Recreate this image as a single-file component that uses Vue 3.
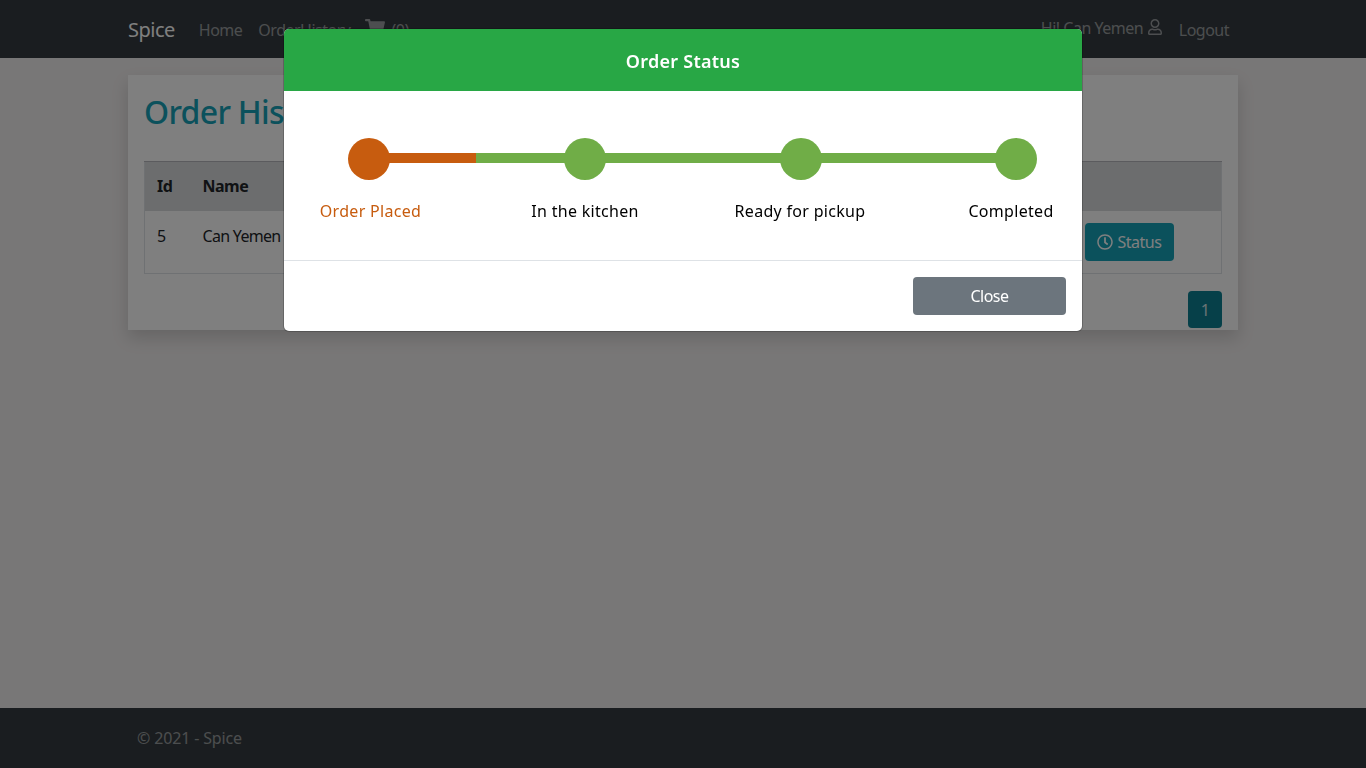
<template>
  <div class="page">
    <header class="navbar">
      <div class="wrap nav-inner">
        <a class="brand">Spice</a>
        <a class="nav-link">Home</a>
        <a class="nav-link">OrderHistory</a>
        <a class="nav-link cart">
          <svg class="cart-icon" viewBox="0 0 576 512"><path d="M528 301.3l47.3-208C578.7 78.300 567.300 64 552 64H159.200l-9.200-44.800C147.800 8 137.900 0 126.500 0H24C10.700 0 0 10.700 0 24v16c0 13.300 10.700 24 24 24h69.900l70.200 343.400C147.300 417.100 136 435.200 136 456c0 30.900 25.100 56 56 56s56-25.100 56-56c0-15.700-6.400-29.800-16.800-40h209.600C430.400 426.200 424 440.300 424 456c0 30.900 25.100 56 56 56s56-25.100 56-56c0-22.200-12.900-41.300-31.600-50.400l5.500-24.300c3.400-15-8-29.300-23.400-29.300H218.100l-6.500-32h293c11.200 0 20.900-7.800 23.400-18.700z"/></svg>
          <span>(0)</span>
        </a>
        <div class="nav-right">
          <span class="hello">Hi! Can Yemen
            <svg class="user-icon" viewBox="0 0 448 512"><path d="M313.600 304c-28.700 0-42.500 16-89.600 16-47.100 0-60.800-16-89.600-16C60.200 304 0 364.200 0 438.400V464c0 26.500 21.500 48 48 48h352c26.500 0 48-21.500 48-48v-25.600c0-74.200-60.200-134.400-134.400-134.400zM400 464H48v-25.600c0-47.600 38.800-86.400 86.400-86.400 14.600 0 38.300 16 89.600 16 51.700 0 74.900-16 89.600-16 47.600 0 86.400 38.800 86.400 86.400V464zM224 288c79.500 0 144-64.500 144-144S303.500 0 224 0 80 64.500 80 144s64.500 144 144 144zm0-240c52.900 0 96 43.100 96 96s-43.100 96-96 96-96-43.100-96-96 43.100-96 96-96z"/></svg>
          </span>
          <a class="nav-link">Logout</a>
        </div>
      </div>
    </header>

    <main class="wrap content">
      <section class="card">
        <h1>Order History</h1>
        <table>
          <thead>
            <tr>
              <th class="col-id">Id</th>
              <th class="col-name">Name</th>
              <th></th>
              <th class="col-action"></th>
            </tr>
          </thead>
          <tbody>
            <tr>
              <td>5</td>
              <td>Can Yemen</td>
              <td></td>
              <td>
                <button class="status-btn">
                  <svg class="clock-icon" viewBox="0 0 512 512"><path d="M256 8C119 8 8 119 8 256s111 248 248 248 248-111 248-248S393 8 256 8zm0 448c-110.500 0-200-89.500-200-200S145.500 56 256 56s200 89.500 200 200-89.500 200-200 200zm61.800-104.400l-84.900-61.700c-3.100-2.300-4.900-5.900-4.900-9.700V116c0-6.600 5.400-12 12-12h32c6.600 0 12 5.400 12 12v141.700l66.800 48.600c5.400 3.900 6.500 11.400 2.600 16.800L334.600 349c-3.900 5.300-11.400 6.500-16.800 2.600z"/></svg>
                  Status
                </button>
              </td>
            </tr>
          </tbody>
        </table>
        <div class="pager"><span class="page-num">1</span></div>
      </section>
    </main>

    <footer class="footer">
      <div class="wrap footer-inner">© 2021 - Spice</div>
    </footer>

    <div class="backdrop"></div>

    <div class="modal" role="dialog">
      <div class="modal-head">Order Status</div>
      <div class="modal-body">
        <div class="track">
          <div class="line"><div class="line-done"></div></div>
          <span v-for="(s, i) in steps" :key="s" class="dot" :class="{ active: i === current }"></span>
        </div>
        <div class="labels">
          <span v-for="(s, i) in steps" :key="s" class="label" :class="{ active: i === current }">{{ s }}</span>
        </div>
      </div>
      <div class="modal-foot">
        <button class="close-btn">Close</button>
      </div>
    </div>
  </div>
</template>

<script setup>
const steps = ['Order Placed', 'In the kitchen', 'Ready for pickup', 'Completed']
const current = 0
</script>

<style>
html, body { margin: 0; height: 100%; }
</style>

<style scoped>
.page {
  min-height: 768px;
  display: flex;
  flex-direction: column;
  background: #f1eeee;
  font-family: "Noto Sans", "Open Sans", sans-serif;
  font-size: 16px;
  letter-spacing: -.5px;
  color: #212529;
  overflow: hidden;
}
.wrap { width: 1110px; margin: 0 auto; }

.navbar { height: 58px; background: #343a40; flex: none; }
.nav-inner { display: flex; align-items: center; height: 58px; color: rgba(255,255,255,.5); }
.brand { color: #fff; font-size: 20px; margin-right: 24px; }
.nav-link { margin-right: 14px; margin-top: 1px; }
.nav-link:nth-of-type(2) { margin-right: 16px; }
.cart { display: flex; align-items: center; gap: 7px; margin-right: 0; }
.cart-icon { width: 20px; height: 18px; fill: rgba(255,255,255,.5); margin-top: -4px; }
.nav-right { margin-left: auto; display: flex; align-items: center; }
.hello { margin-right: 9px; margin-top: -2px; }
.user-icon { width: 14px; height: 16px; fill: rgba(255,255,255,.5); vertical-align: -1px; margin-left: 1px; }
.nav-right .nav-link { margin-left: 8px; margin-right: 9px; }

.content { flex: 1; padding-top: 17px; }
.card {
  height: 255px;
  box-sizing: border-box;
  padding: 16px;
  background: #fff;
  box-shadow: 0 8px 16px rgba(0,0,0,.15);
}
h1 { margin: 0 0 30px; height: 40px; font-size: 32px; line-height: 42px; font-weight: 500; letter-spacing: -.7px; color: #17a2b8; }
table { width: 100%; border-collapse: collapse; border: 1px solid #dee2e6; table-layout: fixed; }
thead th { height: 49px; padding: 0 12px; background: #d9dbdd; text-align: left; border-top: 1px solid #b6b6bc; box-sizing: border-box; }
tbody td { height: 63px; padding: 0 12px; box-sizing: border-box; vertical-align: top; }
tbody td:nth-child(-n+2) { padding-top: 14px; letter-spacing: -.7px; }
tbody td:last-child { padding-top: 12px; }
.col-id { width: 46px; }
.col-name { width: 300px; }
.col-action { width: 149px; }
.status-btn {
  display: inline-flex;
  align-items: center;
  gap: 5px;
  height: 38px;
  width: 89px;
  justify-content: center;
  padding: 0;
  border: 0;
  border-radius: 4px;
  background: #17a2b8;
  color: #fff;
  font: inherit;
  letter-spacing: inherit;
}
.clock-icon { width: 16px; height: 16px; fill: #fff; }
.pager { display: flex; justify-content: flex-end; margin-top: 17px; }
.page-num {
  width: 34px; height: 37px;
  display: flex; align-items: center; justify-content: center;
  background: #0c8193; color: #d5e6e9; border-radius: 4px;
}

.footer { height: 60px; flex: none; background: #343a40; }
.footer-inner { height: 60px; display: flex; align-items: center; padding-left: 9px; box-sizing: border-box; color: rgba(255,255,255,.5); letter-spacing: -.15px; }

.backdrop { position: fixed; inset: 0; background: rgba(0,0,0,.5); }

.modal {
  position: fixed;
  top: 29px;
  left: 284px;
  width: 798px;
  height: 302px;
  background: #fff;
  border-radius: 5px;
  box-shadow: 0 0 0 1px rgba(0,0,0,.2);
  overflow: hidden;
  display: flex;
  flex-direction: column;
}
.modal-head {
  height: 62px; flex: none;
  display: flex; align-items: center; justify-content: center;
  background: #28a745; color: #fff;
  font-size: 18px; font-weight: 600;
  letter-spacing: .25px;
  padding-top: 1px;
  box-sizing: border-box;
}
.modal-body { flex: 1; padding-top: 46px; box-sizing: border-box; border-bottom: 1px solid #dee2e6; }
.track { position: relative; width: 689.500px; height: 42px; margin-left: 64px; display: flex; justify-content: space-between; }
.line { position: absolute; left: 21px; right: 21px; top: 16px; height: 10px; background: #70ad47; }
.line-done { width: 107px; height: 100%; background: #c75c0f; }
.dot { position: relative; top: .5px; width: 42px; height: 42px; border-radius: 50%; background: #70ad47; }
.dot.active { background: #c75c0f; }
.labels { display: grid; grid-template-columns: repeat(4, 216px); margin: 20px 0 0 -23px; color: #000; letter-spacing: .3px; }
.label { text-align: center; line-height: 24px; white-space: nowrap; }
.label.active { color: #c75c0f; margin-left: 3px; }
.label:nth-child(3) { margin-right: 2px; }
.label:last-child { margin-right: 12px; }
.modal-foot { height: 70px; flex: none; display: flex; align-items: center; justify-content: flex-end; padding-right: 16px; }
.close-btn {
  width: 153px; height: 38px;
  border: 0; border-radius: 4px;
  background: #6c757d; color: #fff;
  font: inherit;
  letter-spacing: inherit;
}
</style>
